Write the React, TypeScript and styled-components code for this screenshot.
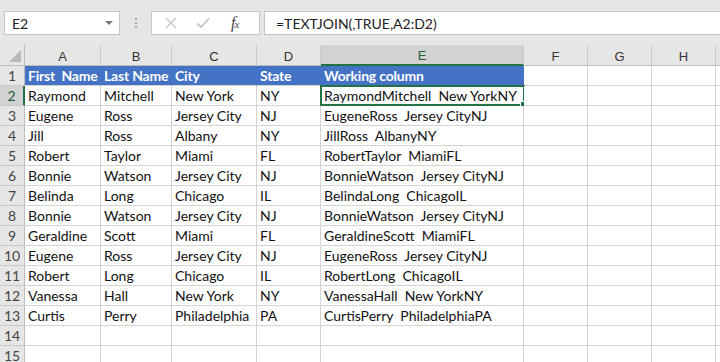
import React from 'react';
import styled, { createGlobalStyle } from 'styled-components';

const GlobalStyle = createGlobalStyle`
    html, body {
        margin: 0;
        padding: 0;
        background: #e6e6e6;
        font-family: "Lato", "Liberation Sans", sans-serif;
        overflow: hidden;
    }
`;

const Sheet = styled.div`
    width: 720px;
    height: 362px;
    overflow: hidden;
    background: #e6e6e6;
`;

const FormulaBar = styled.div`
    display: flex;
    align-items: center;
    height: 24px;
    padding: 11px 0 10px 4px;
`;

const NameBox = styled.div`
    box-sizing: border-box;
    width: 116px;
    height: 24px;
    background: #fff;
    border: 1px solid #c6c6c6;
    display: flex;
    align-items: center;
    justify-content: space-between;
    padding: 0 6px 0 7px;
    font-size: 14px;
    color: #222;
`;

const Caret = styled.span`
    width: 0;
    height: 0;
    border-left: 4px solid transparent;
    border-right: 4px solid transparent;
    border-top: 4px solid #777;
`;

const Grip = styled.div`
    width: 31px;
    display: flex;
    flex-direction: column;
    align-items: center;
    gap: 2px;
    span {
        width: 2px;
        height: 2px;
        background: #a6a6a6;
    }
`;

const ButtonBox = styled.div`
    box-sizing: border-box;
    width: 109px;
    height: 24px;
    background: #fff;
    border: 1px solid #c6c6c6;
    display: flex;
    align-items: center;
    padding-left: 13px;
    gap: 19px;
`;

const Fx = styled.span`
    font-family: "Liberation Serif", serif;
    font-style: italic;
    font-size: 16px;
    color: #444;
    margin-left: 2px;
    letter-spacing: -1px;
    sub {
        font-size: 11px;
        vertical-align: 0;
    }
`;

const FormulaInput = styled.div`
    box-sizing: border-box;
    flex: 1;
    height: 24px;
    margin-left: 4px;
    background: #fff;
    border: 1px solid #c6c6c6;
    border-right: none;
    display: flex;
    align-items: center;
    padding-left: 11px;
    font-size: 14px;
    color: #222;
`;

const Grid = styled.div`
    display: grid;
    grid-template-columns: 25px 76px 71px 85px 64px 203px 64px 64px 64px 64px;
    grid-auto-rows: 20px;
    grid-template-rows: 21px;
    background: #fff;
`;

const Corner = styled.div`
    position: relative;
    background: #e6e6e6;
    border-right: 1px solid #bdbdbd;
    border-bottom: 1px solid #bdbdbd;
    box-sizing: border-box;
    &::after {
        content: '';
        position: absolute;
        right: 3px;
        bottom: 3px;
        width: 0;
        height: 0;
        border-left: 12px solid transparent;
        border-bottom: 12px solid #b8b8b8;
    }
`;

const ColHead = styled.div<{ $active?: boolean }>`
    box-sizing: border-box;
    background: ${p => (p.$active ? '#d2d2d2' : '#e6e6e6')};
    border-right: 1px solid #c9c9c9;
    border-bottom: ${p => (p.$active ? '2px solid #217346' : '1px solid #bdbdbd')};
    display: flex;
    align-items: center;
    justify-content: center;
    font-family: "Liberation Sans", sans-serif;
    font-size: 13px;
    padding-top: 2px;
    color: ${p => (p.$active ? '#1e5e38' : '#333')};
`;

const RowHead = styled.div<{ $active?: boolean }>`
    box-sizing: border-box;
    background: ${p => (p.$active ? '#d2d2d2' : '#e6e6e6')};
    border-right: ${p => (p.$active ? '2px solid #217346' : '1px solid #bdbdbd')};
    border-bottom: 1px solid #c9c9c9;
    display: flex;
    align-items: center;
    justify-content: center;
    font-size: 14px;
    color: ${p => (p.$active ? '#1e5e38' : '#444')};
`;

const Cell = styled.div<{ $head?: boolean }>`
    box-sizing: border-box;
    border-right: 1px solid ${p => (p.$head ? '#4472c4' : '#d4d4d4')};
    border-bottom: 1px solid #d4d4d4;
    background: ${p => (p.$head ? '#4472c4' : '#fff')};
    color: ${p => (p.$head ? '#fff' : '#111')};
    font-weight: ${p => (p.$head ? 700 : 400)};
    letter-spacing: ${p => (p.$head ? '-0.2px' : '0')};
    font-size: 14px;
    line-height: 19px;
    padding-left: 3px;
    white-space: pre;
    position: relative;
`;

const Selection = styled.div`
    position: absolute;
    left: -1px;
    top: -1px;
    right: -2px;
    bottom: -1px;
    border: 2px solid #217346;
    pointer-events: none;
    &::after {
        content: '';
        position: absolute;
        right: -4px;
        bottom: -4px;
        width: 5px;
        height: 5px;
        background: #217346;
        border: 1px solid #fff;
    }
`;

const columns = ['A', 'B', 'C', 'D', 'E', 'F', 'G', 'H', ''];

const rows: string[][] = [
    ['First  Name', 'Last Name', 'City', 'State', 'Working column'],
    ['Raymond', 'Mitchell', 'New York', 'NY', 'RaymondMitchell  New YorkNY'],
    ['Eugene', 'Ross', 'Jersey City', 'NJ', 'EugeneRoss  Jersey CityNJ'],
    ['Jill', 'Ross', 'Albany', 'NY', 'JillRoss  AlbanyNY'],
    ['Robert', 'Taylor', 'Miami', 'FL', 'RobertTaylor  MiamiFL'],
    ['Bonnie', 'Watson', 'Jersey City', 'NJ', 'BonnieWatson  Jersey CityNJ'],
    ['Belinda', 'Long', 'Chicago', 'IL', 'BelindaLong  ChicagoIL'],
    ['Bonnie', 'Watson', 'Jersey City', 'NJ', 'BonnieWatson  Jersey CityNJ'],
    ['Geraldine', 'Scott', 'Miami', 'FL', 'GeraldineScott  MiamiFL'],
    ['Eugene', 'Ross', 'Jersey City', 'NJ', 'EugeneRoss  Jersey CityNJ'],
    ['Robert', 'Long', 'Chicago', 'IL', 'RobertLong  ChicagoIL'],
    ['Vanessa', 'Hall', 'New York', 'NY', 'VanessaHall  New YorkNY'],
    ['Curtis', 'Perry', 'Philadelphia', 'PA', 'CurtisPerry  PhiladelphiaPA'],
    [],
    [],
];

const App: React.FC = () => {
    return (
        <Sheet>
            <GlobalStyle />
            <FormulaBar>
                <NameBox>
                    E2
                    <Caret />
                </NameBox>
                <Grip>
                    <span />
                    <span />
                    <span />
                </Grip>
                <ButtonBox>
                    <svg width="12" height="12" viewBox="0 0 12 12">
                        <path d="M1 1 L11 11 M11 1 L1 11" stroke="#c4c4c4" strokeWidth="1.4" />
                    </svg>
                    <svg width="14" height="12" viewBox="0 0 14 12">
                        <path d="M1 6.5 L5 10 L13 1.5" stroke="#c4c4c4" strokeWidth="1.8" fill="none" />
                    </svg>
                    <Fx>
                        f<sub>x</sub>
                    </Fx>
                </ButtonBox>
                <FormulaInput>=TEXTJOIN(,TRUE,A2:D2)</FormulaInput>
            </FormulaBar>
            <Grid>
                <Corner />
                {columns.map((c, j) => (
                    <ColHead key={j} $active={c === 'E'}>
                        {c}
                    </ColHead>
                ))}
                {rows.map((row, i) => (
                    <React.Fragment key={i}>
                        <RowHead $active={i === 1}>{i + 1}</RowHead>
                        {columns.map((c, j) => (
                            <Cell key={j} $head={i === 0 && j < 5}>
                                {row[j] || ''}
                                {i === 1 && j === 4 && <Selection />}
                            </Cell>
                        ))}
                    </React.Fragment>
                ))}
            </Grid>
        </Sheet>
    );
};

export default App;
